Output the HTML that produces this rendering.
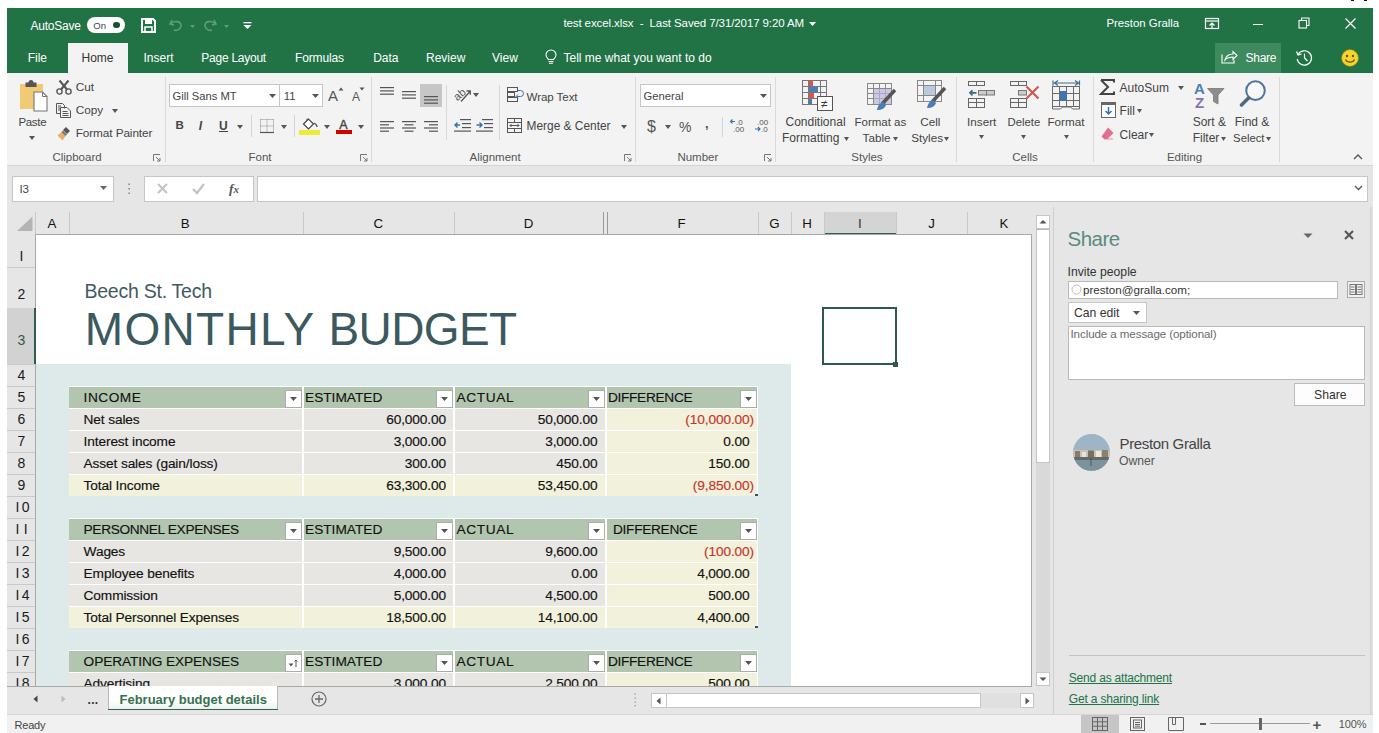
<!DOCTYPE html>
<html><head><meta charset="utf-8">
<style>
*{margin:0;padding:0;box-sizing:border-box}
html,body{width:1379px;height:733px;overflow:hidden;background:#fff;font-family:"Liberation Sans",sans-serif;color:#333}
.a{position:absolute}
svg.a{overflow:visible}
.t{position:absolute;white-space:nowrap;line-height:1}

.st{-webkit-text-stroke:0.2px currentColor}

</style></head><body>
<div class="a" style="left:7px;top:8px;width:1366px;height:65px;background:#217346"></div>
<div class="t" style="left:30.4px;top:19.8px;font-size:12px;color:#fff;letter-spacing:-0.2px">AutoSave</div>
<div class="a" style="left:87px;top:17px;width:38px;height:16px;border-radius:8px;background:#fff"></div>
<div class="t" style="left:93.3px;top:20.7px;font-size:9.6px;color:#444;">On</div>
<div class="a" style="left:113.4px;top:21.6px;width:6.5px;height:6.5px;border-radius:50%;background:#1f4e35"></div>
<svg class="a" style="left:141px;top:17.5px" width="15" height="15" viewBox="0 0 15 15"><path d="M1 1h11l2 2v11H1z" fill="none" stroke="#fff" stroke-width="2"/><rect x="4" y="2" width="7" height="4" fill="#fff"/><rect x="4" y="9" width="7" height="5" fill="none" stroke="#fff" stroke-width="1.5"/></svg>
<svg class="a" style="left:168px;top:17px" width="62" height="16" viewBox="0 0 62 16"><g fill="none" stroke="#5c9e7b" stroke-width="1.6"><path d="M4 3 L2 7 L6 8"/><path d="M2.5 7 C6 3 14 4 13 9 C12 13 8 14 6 13"/><path d="M46 3 L48 7 L44 8"/><path d="M47.5 7 C44 3 36 4 37 9 C38 13 42 14 44 13"/></g><path d="M22 8h5l-2.5 3z M56 8h5l-2.5 3z" fill="#5c9e7b"/></svg>
<svg class="a" style="left:243px;top:21px" width="9" height="9" viewBox="0 0 9 9"><rect x="0.5" y="1" width="8" height="1.3" fill="#fff"/><path d="M0.5 4h8l-4 4z" fill="#fff"/></svg>
<div class="t" style="left:563.4px;top:18.3px;font-size:11.5px;color:#fff;letter-spacing:-0.1px">test excel.xlsx&nbsp; -&nbsp; Last Saved 7/31/2017 9:20 AM</div>
<svg class="a" style="left:809px;top:22px" width="7" height="5" viewBox="0 0 7 5"><path d="M0 0h7l-3.5 4z" fill="#fff"/></svg>
<div class="t" style="left:1106.4px;top:18.3px;font-size:11.4px;color:#fff;">Preston Gralla</div>
<svg class="a" style="left:1204px;top:17px" width="16" height="13" viewBox="0 0 16 13"><g fill="none" stroke="#fff" stroke-width="1.2"><rect x="1.5" y="1.5" width="13" height="10"/><path d="M1.5 4h13"/><path d="M8 11V6 M5.5 8.5L8 6l2.5 2.5"/></g></svg>
<div class="a" style="left:1253px;top:23.5px;width:10px;height:1.2px;background:#fff"></div>
<svg class="a" style="left:1298px;top:17px" width="12" height="12" viewBox="0 0 12 12"><g fill="none" stroke="#fff" stroke-width="1.1"><rect x="1" y="3.5" width="7.5" height="7.5"/><path d="M3.5 3.5V1h7.5v7.5H8.5"/></g></svg>
<svg class="a" style="left:1344.5px;top:17.5px" width="11" height="11" viewBox="0 0 11 11"><path d="M0.5 0.5L10.5 10.5M10.5 0.5L0.5 10.5" stroke="#fff" stroke-width="1.2"/></svg>
<div class="a" style="left:1351.3px;top:0px;width:2.5px;height:1.3px;background:#111"></div>
<div class="a" style="left:1364.3px;top:0px;width:2.7px;height:1.3px;background:#111"></div>
<div class="a" style="left:68px;top:43px;width:60px;height:30px;background:#f3f3f3"></div>
<div class="t" style="left:27.7px;top:52.0px;font-size:12px;color:#fff;">File</div>
<div class="t" style="left:81.5px;top:52.0px;font-size:12px;color:#333;">Home</div>
<div class="t" style="left:143.5px;top:52.0px;font-size:12px;color:#fff;">Insert</div>
<div class="t" style="left:201.3px;top:52.0px;font-size:12px;color:#fff;letter-spacing:-0.25px">Page Layout</div>
<div class="t" style="left:295.0px;top:52.0px;font-size:12px;color:#fff;letter-spacing:-0.15px">Formulas</div>
<div class="t" style="left:373.2px;top:52.0px;font-size:12px;color:#fff;">Data</div>
<div class="t" style="left:426.0px;top:52.0px;font-size:12px;color:#fff;">Review</div>
<div class="t" style="left:492.0px;top:52.0px;font-size:12px;color:#fff;">View</div>
<svg class="a" style="left:545px;top:50px" width="12" height="14" viewBox="0 0 12 14"><g fill="none" stroke="#fff" stroke-width="1.1"><path d="M3.5 9.5C2 8 1 6.5 1 5a5 5 0 0 1 10 0c0 1.5-1 3-2.5 4.5z"/><path d="M3.5 11.5h5M4 13.2h4"/></g></svg>
<div class="t" style="left:563.5px;top:52.0px;font-size:12px;color:#fff;">Tell me what you want to do</div>
<div class="a" style="left:1215px;top:43px;width:66px;height:30px;background:#3d8a5e"></div>
<svg class="a" style="left:1221px;top:49px" width="17" height="15" viewBox="0 0 17 15"><g fill="none" stroke="#fff" stroke-width="1.1"><path d="M1 5.5V14h12v-3"/><path d="M4 11c1-4 4-6 8-6V2.5l4 4-4 4V8c-3 0-6 1-8 3z"/></g></svg>
<div class="t" style="left:1245.6px;top:52.0px;font-size:12px;color:#fff;letter-spacing:-0.3px">Share</div>
<svg class="a" style="left:1295px;top:48.5px" width="18" height="17" viewBox="0 0 18 17"><g fill="none" stroke="#fff" stroke-width="1.2"><path d="M3 5.5A7.2 7.2 0 1 1 2.2 10"/><path d="M1.5 2.5L3 6l3.5-1"/><path d="M9.5 4.5V9l3 3"/></g></svg>
<svg class="a" style="left:1341px;top:48.5px" width="18" height="18" viewBox="0 0 18 18"><circle cx="9" cy="9" r="8.3" fill="#f6d32d" stroke="#c9a400" stroke-width="0.6"/><circle cx="6" cy="7" r="1.2" fill="#6b5300"/><circle cx="12" cy="7" r="1.2" fill="#6b5300"/><path d="M4.5 10.5C6 14 12 14 13.5 10.5" fill="none" stroke="#6b5300" stroke-width="1.2"/></svg>
<div class="a" style="left:7px;top:73px;width:1366px;height:92px;background:#f3f3f3"></div>
<div class="a" style="left:7px;top:165px;width:1366px;height:1px;background:#d4d4d4"></div>
<div class="a" style="left:165px;top:77px;width:1px;height:85px;background:#dadada"></div>
<div class="a" style="left:371px;top:77px;width:1px;height:85px;background:#dadada"></div>
<div class="a" style="left:635px;top:77px;width:1px;height:85px;background:#dadada"></div>
<div class="a" style="left:775px;top:77px;width:1px;height:85px;background:#dadada"></div>
<div class="a" style="left:956px;top:77px;width:1px;height:85px;background:#dadada"></div>
<div class="a" style="left:1093px;top:77px;width:1px;height:85px;background:#dadada"></div>
<div class="a" style="left:1279px;top:77px;width:1px;height:85px;background:#dadada"></div>
<svg class="a" style="left:18px;top:80px" width="32" height="32" viewBox="0 0 32 32"><rect x="2" y="4" width="23" height="25" fill="#f1c25e" opacity="0.85"/><path d="M7.5 2.5h3a2.5 2.5 0 0 1 5 0h3v4.5h-11z" fill="#555"/><path d="M16 12h8.5l4.5 4.5V31H16z" fill="#fff" stroke="#777" stroke-width="1.1"/><path d="M24.5 12v4.5H29" fill="none" stroke="#777" stroke-width="1"/></svg>
<div class="t" style="left:18.4px;top:116.8px;font-size:11.5px;color:#444;letter-spacing:-0.3px">Paste</div>
<svg class="a" style="left:28.5px;top:135.5px" width="6" height="4" viewBox="0 0 6 4"><path d="M0 0h6l-3.0 4z" fill="#555"/></svg>
<svg class="a" style="left:56px;top:79.5px" width="16" height="15" viewBox="0 0 16 15"><g fill="none" stroke="#555" stroke-width="1.4"><circle cx="3.5" cy="11.5" r="2.6"/><circle cx="12.5" cy="11.5" r="2.6"/></g><path d="M5 9.5L12.5 0.5M11 9.5L3.5 0.5" stroke="#555" stroke-width="2"/></svg>
<div class="t" style="left:75.7px;top:82.3px;font-size:11.8px;color:#444;">Cut</div>
<svg class="a" style="left:56px;top:103px" width="16" height="15" viewBox="0 0 16 15"><g fill="none" stroke="#555" stroke-width="1"><path d="M0.5 0.5h6l2 2v3"/><path d="M0.5 0.5v10h4"/><path d="M4.5 4.5h6.5l3.5 3.5v6.5h-10z"/><path d="M6.5 8.5h5M6.5 10.5h6M6.5 12.5h6M2 3h3M2 5h2M2 7h2"/></g></svg>
<div class="t" style="left:75.7px;top:105.1px;font-size:11.8px;color:#444;">Copy</div>
<svg class="a" style="left:112.4px;top:108.5px" width="6" height="4" viewBox="0 0 6 4"><path d="M0 0h6l-3.0 4z" fill="#555"/></svg>
<svg class="a" style="left:57px;top:126px" width="15" height="15" viewBox="0 0 15 15"><path d="M9 1l4 4-3 3-4-4z" fill="#555"/><path d="M6 4.5l4 4-2 2-4-4z" fill="#777"/><path d="M4.5 6l4 4-3 4.5L0.5 9.5z" fill="#e3b462"/></svg>
<div class="t" style="left:75.7px;top:128.3px;font-size:11.8px;color:#444;letter-spacing:-0.1px">Format Painter</div>
<div class="t" style="left:52.4px;top:152.1px;font-size:11.5px;color:#555;">Clipboard</div>
<svg class="a" style="left:153px;top:154px" width="8" height="8" viewBox="0 0 8 8"><path d="M0.5 7V0.5H7" fill="none" stroke="#777" stroke-width="1"/><path d="M3 3l4 4M4 7h3V4" fill="none" stroke="#777" stroke-width="1"/></svg>
<div class="a" style="left:169px;top:84px;width:111px;height:23px;background:#fff;border:1px solid #c6c6c6"></div>
<div class="t" style="left:172.6px;top:90.7px;font-size:11.2px;color:#444;">Gill Sans MT</div>
<svg class="a" style="left:268.9px;top:93.5px" width="7" height="4" viewBox="0 0 7 4"><path d="M0 0h7l-3.5 4z" fill="#555"/></svg>
<div class="a" style="left:279px;top:84px;width:44px;height:23px;background:#fff;border:1px solid #c6c6c6"></div>
<div class="t" style="left:283.8px;top:90.7px;font-size:11.2px;color:#444;">11</div>
<svg class="a" style="left:311.9px;top:93.5px" width="7" height="4" viewBox="0 0 7 4"><path d="M0 0h7l-3.5 4z" fill="#555"/></svg>
<svg class="a" style="left:328px;top:86px" width="16" height="16" viewBox="0 0 16 16"><text x="0" y="14.5" font-family="Liberation Sans" font-size="15" fill="#555">A</text><path d="M10.5 4.5l2.5-3 2.5 3z" fill="#555"/></svg>
<svg class="a" style="left:351px;top:86px" width="14" height="16" viewBox="0 0 14 16"><text x="1" y="14.5" font-family="Liberation Sans" font-size="12" fill="#555">A</text><path d="M8.5 1.5h5l-2.5 3z" fill="#555"/></svg>
<div class="t" style="left:175.5px;top:120.3px;font-size:11.5px;color:#444;font-weight:bold">B</div>
<div class="t" style="left:198.8px;top:119.8px;font-size:12px;color:#444;font-style:italic;font-weight:bold">I</div>
<div class="t" style="left:219.0px;top:119.8px;font-size:12px;color:#444;font-weight:bold">U</div>
<div class="a" style="left:219px;top:131px;width:9px;height:1.3px;background:#444"></div>
<svg class="a" style="left:237.4px;top:124.5px" width="6" height="4" viewBox="0 0 6 4"><path d="M0 0h6l-3.0 4z" fill="#555"/></svg>
<div class="a" style="left:251px;top:115px;width:1px;height:22px;background:#d4d4d4"></div>
<svg class="a" style="left:259.5px;top:118.5px" width="14" height="14" viewBox="0 0 14 14"><g fill="none" stroke="#888" stroke-width="1" stroke-dasharray="1 1"><path d="M0.5 0.5h13M0.5 7h13M0.5 0.5v13M7 0.5v13M13.5 0.5v13"/></g><path d="M0 13.5h14" stroke="#555" stroke-width="1.2"/></svg>
<svg class="a" style="left:280.8px;top:124.5px" width="6" height="4" viewBox="0 0 6 4"><path d="M0 0h6l-3.0 4z" fill="#555"/></svg>
<div class="a" style="left:294px;top:115px;width:1px;height:22px;background:#d4d4d4"></div>
<svg class="a" style="left:302px;top:117px" width="17" height="13" viewBox="0 0 17 13"><path d="M5 1.5v3" stroke="#555" stroke-width="1"/><path d="M1.5 7l5-5 5 5-5 5z" fill="#fff" stroke="#444" stroke-width="1.2"/><path d="M12 6c2 1 3 2.5 3 4" stroke="#555" stroke-width="1.3" fill="none"/></svg>
<div class="a" style="left:299px;top:130px;width:20.5px;height:4.5px;background:#eeea3a"></div>
<svg class="a" style="left:323.7px;top:124.5px" width="6" height="4" viewBox="0 0 6 4"><path d="M0 0h6l-3.0 4z" fill="#555"/></svg>
<div class="t" style="left:339.2px;top:118.6px;font-size:12.5px;color:#444;-webkit-text-stroke:0.4px #444">A</div>
<div class="a" style="left:336px;top:130px;width:16px;height:4px;background:#d40000"></div>
<svg class="a" style="left:357.7px;top:124.5px" width="6" height="4" viewBox="0 0 6 4"><path d="M0 0h6l-3.0 4z" fill="#555"/></svg>
<div class="t" style="left:248.5px;top:152.1px;font-size:11.5px;color:#555;">Font</div>
<svg class="a" style="left:360px;top:154px" width="8" height="8" viewBox="0 0 8 8"><path d="M0.5 7V0.5H7" fill="none" stroke="#777" stroke-width="1"/><path d="M3 3l4 4M4 7h3V4" fill="none" stroke="#777" stroke-width="1"/></svg>
<svg class="a" style="left:380px;top:87px" width="14" height="8.6" viewBox="0 0 14 8.6"><rect x="0" y="0.0" width="14" height="1.2" fill="#555"/><rect x="0" y="3.3" width="14" height="1.2" fill="#555"/><rect x="0" y="6.6" width="14" height="1.2" fill="#555"/></svg>
<svg class="a" style="left:402px;top:91px" width="14" height="8.6" viewBox="0 0 14 8.6"><rect x="0" y="0.0" width="14" height="1.2" fill="#555"/><rect x="0" y="3.3" width="14" height="1.2" fill="#555"/><rect x="0" y="6.6" width="14" height="1.2" fill="#555"/></svg>
<div class="a" style="left:420px;top:84px;width:22px;height:23px;background:#c6c6c6"></div>
<svg class="a" style="left:424px;top:96px" width="14" height="8.6" viewBox="0 0 14 8.6"><rect x="0" y="0.0" width="14" height="1.2" fill="#555"/><rect x="0" y="3.3" width="14" height="1.2" fill="#555"/><rect x="0" y="6.6" width="14" height="1.2" fill="#555"/></svg>
<svg class="a" style="left:380px;top:121px" width="14" height="11" viewBox="0 0 14 11"><g fill="#555"><rect y="0" width="14" height="1.2"/><rect y="3.2" width="9" height="1.2"/><rect y="6.4" width="14" height="1.2"/><rect y="9.6" width="9" height="1.2"/></g></svg>
<svg class="a" style="left:402px;top:121px" width="14" height="11" viewBox="0 0 14 11"><g fill="#555"><rect y="0" width="14" height="1.2"/><rect x="2.5" y="3.2" width="9" height="1.2"/><rect y="6.4" width="14" height="1.2"/><rect x="2.5" y="9.6" width="9" height="1.2"/></g></svg>
<svg class="a" style="left:424px;top:121px" width="14" height="11" viewBox="0 0 14 11"><g fill="#555"><rect y="0" width="14" height="1.2"/><rect x="5" y="3.2" width="9" height="1.2"/><rect y="6.4" width="14" height="1.2"/><rect x="5" y="9.6" width="9" height="1.2"/></g></svg>
<div class="a" style="left:446px;top:85px;width:1px;height:55px;background:#d8d8d8"></div>
<svg class="a" style="left:454px;top:87px" width="18" height="15" viewBox="0 0 18 15"><text x="0" y="11" font-family="Liberation Sans" font-size="11" fill="#555" transform="rotate(-40 6 8)">ab</text><path d="M7 14.5L16 4.5M12.5 4h3.8v3.8" fill="none" stroke="#555" stroke-width="1.3"/></svg>
<svg class="a" style="left:473.3px;top:92.5px" width="6" height="4" viewBox="0 0 6 4"><path d="M0 0h6l-3.0 4z" fill="#555"/></svg>
<svg class="a" style="left:454px;top:119px" width="17" height="13" viewBox="0 0 17 13"><g fill="#555"><rect x="6" y="0" width="11" height="1.2"/><rect x="8" y="4" width="9" height="1.2"/><rect x="8" y="8" width="9" height="1.2"/><rect x="0" y="11.5" width="17" height="1.2"/></g><path d="M6 6H1M3.5 3.5L1 6l2.5 2.5" fill="none" stroke="#2e75b6" stroke-width="1.4"/></svg>
<svg class="a" style="left:476px;top:119px" width="17" height="13" viewBox="0 0 17 13"><g fill="#555"><rect x="6" y="0" width="11" height="1.2"/><rect x="8" y="4" width="9" height="1.2"/><rect x="8" y="8" width="9" height="1.2"/><rect x="0" y="11.5" width="17" height="1.2"/></g><path d="M0.5 6H6M3.5 3.5L6 6l-2.5 2.5" fill="none" stroke="#2e75b6" stroke-width="1.4"/></svg>
<div class="a" style="left:499px;top:85px;width:1px;height:55px;background:#d8d8d8"></div>
<svg class="a" style="left:507px;top:87px" width="17" height="15" viewBox="0 0 17 15"><g fill="none" stroke="#555" stroke-width="1"><rect x="0.5" y="0.5" width="10" height="4"/><rect x="0.5" y="5.5" width="7" height="4"/><rect x="0.5" y="10.5" width="10" height="4"/><path d="M11 3.5h2.5a3 3 0 0 1 0 6H9.5M11 7.5l-2 2 2 2" stroke="#2e75b6"/></g></svg>
<div class="t" style="left:526.6px;top:90.7px;font-size:11.6px;color:#444;letter-spacing:-0.1px">Wrap Text</div>
<svg class="a" style="left:507px;top:118px" width="15" height="15" viewBox="0 0 15 15"><g fill="none" stroke="#555" stroke-width="1"><rect x="0.5" y="0.5" width="14" height="14"/><path d="M0.5 4.5h14M0.5 10.5h14M7.5 0.5v4M7.5 10.5v4M3 7.5h9M4.5 6l-1.5 1.5 1.5 1.5M10.5 6l1.5 1.5-1.5 1.5"/></g></svg>
<div class="t" style="left:526.6px;top:121.3px;font-size:11.9px;color:#444;">Merge &amp; Center</div>
<svg class="a" style="left:620.6px;top:125px" width="6" height="4" viewBox="0 0 6 4"><path d="M0 0h6l-3.0 4z" fill="#555"/></svg>
<div class="t" style="left:469.5px;top:152.1px;font-size:11.5px;color:#555;">Alignment</div>
<svg class="a" style="left:624px;top:154px" width="8" height="8" viewBox="0 0 8 8"><path d="M0.5 7V0.5H7" fill="none" stroke="#777" stroke-width="1"/><path d="M3 3l4 4M4 7h3V4" fill="none" stroke="#777" stroke-width="1"/></svg>
<div class="a" style="left:640px;top:84px;width:131px;height:23px;background:#fff;border:1px solid #c6c6c6"></div>
<div class="t" style="left:643.6px;top:90.5px;font-size:11.2px;color:#444;">General</div>
<svg class="a" style="left:759.8px;top:93.5px" width="7" height="4" viewBox="0 0 7 4"><path d="M0 0h7l-3.5 4z" fill="#555"/></svg>
<div class="t" style="left:647.0px;top:119.4px;font-size:16px;color:#555;">$</div>
<svg class="a" style="left:664.6px;top:124.5px" width="6" height="4" viewBox="0 0 6 4"><path d="M0 0h6l-3.0 4z" fill="#555"/></svg>
<div class="t" style="left:679.0px;top:120.1px;font-size:14px;color:#555;">%</div>
<div class="t" style="left:705.0px;top:117.0px;font-size:13px;color:#555;font-weight:bold">,</div>
<div class="a" style="left:722px;top:117px;width:1px;height:20px;background:#d4d4d4"></div>
<svg class="a" style="left:730px;top:118px" width="16" height="15" viewBox="0 0 16 15"><text x="6" y="6.5" font-family="Liberation Sans" font-size="8" fill="#555">.0</text><text x="3" y="14" font-family="Liberation Sans" font-size="8" fill="#555">.00</text><path d="M5 3.5H0.5M2.5 1.5L0.5 3.5l2 2" fill="none" stroke="#2e75b6" stroke-width="1.1"/></svg>
<svg class="a" style="left:754px;top:118px" width="16" height="15" viewBox="0 0 16 15"><text x="3" y="6.5" font-family="Liberation Sans" font-size="8" fill="#555">.00</text><text x="7" y="14" font-family="Liberation Sans" font-size="8" fill="#555">.0</text><path d="M1 11h5M4 9l2 2-2 2" fill="none" stroke="#2e75b6" stroke-width="1.1"/></svg>
<div class="t" style="left:677.4px;top:152.1px;font-size:11.5px;color:#555;">Number</div>
<svg class="a" style="left:764px;top:154px" width="8" height="8" viewBox="0 0 8 8"><path d="M0.5 7V0.5H7" fill="none" stroke="#777" stroke-width="1"/><path d="M3 3l4 4M4 7h3V4" fill="none" stroke="#777" stroke-width="1"/></svg>
<svg class="a" style="left:802px;top:80px" width="31" height="31" viewBox="0 0 31 31"><g fill="none" stroke="#777" stroke-width="1"><rect x="0.5" y="0.5" width="24" height="24"/><path d="M0.5 6.5h24M0.5 12.5h24M0.5 18.5h24M6.5 0.5v24M18.5 0.5v24"/></g><rect x="7" y="1" width="4" height="5" fill="#d9534f"/><rect x="7" y="7" width="9" height="5" fill="#4a7ebb"/><rect x="7" y="13" width="5" height="5" fill="#d9534f"/><rect x="7" y="19" width="3" height="5" fill="#4a7ebb"/><rect x="15.5" y="16.5" width="15" height="14" fill="#fff" stroke="#555" stroke-width="1"/><text x="19" y="28" font-family="Liberation Sans" font-size="12" fill="#333">≠</text></svg>
<div class="t" style="left:785.5px;top:116.0px;font-size:12px;color:#444;">Conditional</div>
<div class="t" style="left:782.0px;top:131.7px;font-size:12px;color:#444;">Formatting</div>
<svg class="a" style="left:844.1px;top:136.5px" width="5" height="4" viewBox="0 0 5 4"><path d="M0 0h5l-2.5 4z" fill="#555"/></svg>
<svg class="a" style="left:867px;top:83px" width="30" height="29" viewBox="0 0 30 29"><g fill="none" stroke="#888" stroke-width="1"><rect x="0.5" y="0.5" width="24" height="21"/><path d="M0.5 5.5h24M0.5 10.5h24M0.5 15.5h24M6.5 0.5v21M12.5 0.5v21M18.5 0.5v21"/></g><rect x="7" y="6" width="17" height="15" fill="#b9b6d8" opacity="0.7"/><path d="M28 7l-13 14" stroke="#555" stroke-width="3.5"/><path d="M16 19c-3 1-5 3-6 8 5 0 8-2 9-5z" fill="#4a7ebb"/></svg>
<div class="t" style="left:854.5px;top:116.5px;font-size:11.5px;color:#444;">Format as</div>
<div class="t" style="left:862.6px;top:132.0px;font-size:11.7px;color:#444;">Table</div>
<svg class="a" style="left:893.1px;top:136.5px" width="5" height="4" viewBox="0 0 5 4"><path d="M0 0h5l-2.5 4z" fill="#555"/></svg>
<svg class="a" style="left:917px;top:80px" width="30" height="30" viewBox="0 0 30 30"><g fill="none" stroke="#888" stroke-width="1"><rect x="0.5" y="0.5" width="24" height="21"/><path d="M0.5 5.5h24M0.5 15.5h24M6.5 0.5v21M18.5 0.5v21"/></g><rect x="7" y="6" width="11" height="9" fill="#b8c9e0"/><path d="M28 8l-13 14" stroke="#555" stroke-width="3.5"/><path d="M16 20c-3 1-5 3-6 8 5 0 8-2 9-5z" fill="#4a7ebb"/></svg>
<div class="t" style="left:920.3px;top:116.3px;font-size:11.7px;color:#444;">Cell</div>
<div class="t" style="left:911.2px;top:132.0px;font-size:11.7px;color:#444;">Styles</div>
<svg class="a" style="left:943.8px;top:136.5px" width="5" height="4" viewBox="0 0 5 4"><path d="M0 0h5l-2.5 4z" fill="#555"/></svg>
<div class="t" style="left:851.3px;top:152.1px;font-size:11.5px;color:#555;">Styles</div>
<svg class="a" style="left:968px;top:81px" width="28" height="28" viewBox="0 0 28 28"><g fill="none" stroke="#666" stroke-width="1"><rect x="0.5" y="0.5" width="8" height="4"/><rect x="8.5" y="0.5" width="8" height="4"/><rect x="0.5" y="17.5" width="8" height="4"/><rect x="8.5" y="17.5" width="8" height="4"/><rect x="0.5" y="21.5" width="8" height="5"/><rect x="8.5" y="21.5" width="8" height="5"/></g><g fill="#ccc" stroke="#777" stroke-width="1"><rect x="10.5" y="9.5" width="8" height="4.5"/><rect x="18.5" y="9.5" width="8" height="4.5"/></g><path d="M8.5 11.8H2M4.5 9.3L2 11.8 4.5 14.3" fill="none" stroke="#3d6a85" stroke-width="1.8"/></svg>
<div class="t" style="left:967.1px;top:116.3px;font-size:11.7px;color:#444;">Insert</div>
<svg class="a" style="left:978.6px;top:135px" width="5" height="4" viewBox="0 0 5 4"><path d="M0 0h5l-2.5 4z" fill="#555"/></svg>
<svg class="a" style="left:1010px;top:81px" width="31" height="28" viewBox="0 0 31 28"><g fill="none" stroke="#666" stroke-width="1"><rect x="0.5" y="0.5" width="8" height="4"/><rect x="8.5" y="0.5" width="8" height="4"/><rect x="0.5" y="17.5" width="8" height="4"/><rect x="8.5" y="17.5" width="8" height="4"/><rect x="0.5" y="21.5" width="8" height="5"/><rect x="8.5" y="21.5" width="8" height="5"/></g><rect x="8.5" y="9.5" width="8" height="4.5" fill="#ccc" stroke="#777" stroke-width="1"/><path d="M16.5 5.5l12 12M28.5 5.5l-12 12" stroke="#cc5a55" stroke-width="2.2"/></svg>
<div class="t" style="left:1007.6px;top:116.6px;font-size:11.3px;color:#444;">Delete</div>
<svg class="a" style="left:1021.2px;top:135px" width="5" height="4" viewBox="0 0 5 4"><path d="M0 0h5l-2.5 4z" fill="#555"/></svg>
<svg class="a" style="left:1052px;top:79px" width="29" height="32" viewBox="0 0 29 32"><path d="M1 1.5v5M27.5 1.5v5M2.5 4h24M6 1.5L2.5 4 6 6.5M23 1.5l3.5 2.5L23 6.5" fill="none" stroke="#3f6f8a" stroke-width="1.2"/><g fill="none" stroke="#6a6a6a" stroke-width="1"><rect x="0.5" y="7.5" width="27" height="20"/><path d="M7.5 7.5v20M14.5 7.5v20M21.5 7.5v20M0.5 14.5h27M0.5 21.5h27"/><path d="M0.5 27.5v2.5h8l2 -2h8l2 2h7v-2.5"/></g><rect x="8" y="12" width="6.5" height="9.5" fill="#3f77b5"/></svg>
<div class="t" style="left:1047.4px;top:116.3px;font-size:11.7px;color:#444;">Format</div>
<svg class="a" style="left:1063.5px;top:135px" width="5" height="4" viewBox="0 0 5 4"><path d="M0 0h5l-2.5 4z" fill="#555"/></svg>
<div class="t" style="left:1012.2px;top:152.1px;font-size:11.5px;color:#555;">Cells</div>
<svg class="a" style="left:1100px;top:79px" width="16" height="16" viewBox="0 0 16 16"><path d="M1 1h13v2.5M1 1l7 7-7 7h13v-2.5" fill="none" stroke="#444" stroke-width="2"/></svg>
<div class="t" style="left:1119.6px;top:82.4px;font-size:12px;color:#444;">AutoSum</div>
<svg class="a" style="left:1178.2px;top:86px" width="6" height="4" viewBox="0 0 6 4"><path d="M0 0h6l-3.0 4z" fill="#555"/></svg>
<svg class="a" style="left:1101px;top:101.5px" width="15" height="16" viewBox="0 0 15 16"><rect x="0.5" y="0.5" width="14" height="15" fill="#fff" stroke="#666"/><rect x="0.5" y="0.5" width="14" height="2.5" fill="#666"/><path d="M7.5 5v7M4.5 9l3 3 3-3" fill="none" stroke="#2e75b6" stroke-width="1.5"/></svg>
<div class="t" style="left:1119.6px;top:105.1px;font-size:12px;color:#444;">Fill</div>
<svg class="a" style="left:1136.7px;top:109px" width="5" height="4" viewBox="0 0 5 4"><path d="M0 0h5l-2.5 4z" fill="#555"/></svg>
<svg class="a" style="left:1101px;top:127px" width="13" height="12" viewBox="0 0 13 12"><path d="M7 0.5l5.5 5.5-6 6H3L0.5 9.5z" fill="#e0708f"/><path d="M3 12h9" stroke="#e0708f" stroke-width="0.8"/></svg>
<div class="t" style="left:1119.6px;top:128.5px;font-size:12px;color:#444;">Clear</div>
<svg class="a" style="left:1149.1px;top:132.5px" width="5" height="4" viewBox="0 0 5 4"><path d="M0 0h5l-2.5 4z" fill="#555"/></svg>
<svg class="a" style="left:1194px;top:80px" width="32" height="30" viewBox="0 0 32 30"><text x="0" y="13.5" font-family="Liberation Sans" font-size="15" font-weight="bold" fill="#4a7fb5">A</text><text x="1" y="27.5" font-family="Liberation Sans" font-size="15" font-weight="bold" fill="#8a70b0">Z</text><path d="M13.5 8.5h16.5l-6 6.5v9l-4.5-2.5v-6.5z" fill="#8d8d8d" stroke="#777" stroke-width="0.8"/></svg>
<div class="t" style="left:1192.7px;top:116.0px;font-size:12px;color:#444;">Sort &amp;</div>
<div class="t" style="left:1192.7px;top:132.1px;font-size:12px;color:#444;">Filter</div>
<svg class="a" style="left:1221.3px;top:137px" width="5" height="4" viewBox="0 0 5 4"><path d="M0 0h5l-2.5 4z" fill="#555"/></svg>
<svg class="a" style="left:1238px;top:78px" width="30" height="30" viewBox="0 0 30 30"><circle cx="17.5" cy="12.6" r="9.3" fill="#fff" fill-opacity="0.35" stroke="#4d7699" stroke-width="2"/><path d="M10.5 20L3.5 27" stroke="#4d6a85" stroke-width="3.6" stroke-linecap="round"/></svg>
<div class="t" style="left:1234.7px;top:116.0px;font-size:12px;color:#444;">Find &amp;</div>
<div class="t" style="left:1233.1px;top:132.7px;font-size:11.3px;color:#444;">Select</div>
<svg class="a" style="left:1266.4px;top:137px" width="5" height="4" viewBox="0 0 5 4"><path d="M0 0h5l-2.5 4z" fill="#555"/></svg>
<div class="t" style="left:1166.9px;top:152.1px;font-size:11.5px;color:#555;">Editing</div>
<svg class="a" style="left:1353px;top:154px" width="10" height="6" viewBox="0 0 10 6"><path d="M1 5l4-4 4 4" fill="none" stroke="#555" stroke-width="1.4"/></svg>
<div class="a" style="left:7px;top:166px;width:1366px;height:41px;background:#e6e6e6"></div>
<div class="a" style="left:12px;top:176px;width:102px;height:26px;background:#fff;border:1px solid #c6c6c6"></div>
<div class="t" style="left:19.4px;top:183.6px;font-size:11.5px;color:#444;">I3</div>
<svg class="a" style="left:100.0px;top:185.5px" width="7" height="4" viewBox="0 0 7 4"><path d="M0 0h7l-3.5 4z" fill="#666"/></svg>
<svg class="a" style="left:128px;top:183px" width="3" height="12" viewBox="0 0 3 12"><g fill="#8a8a8a"><rect x="0.3" y="0.5" width="1.6" height="1.5"/><rect x="0.3" y="5" width="1.6" height="1.5"/><rect x="0.3" y="9.5" width="1.6" height="1.5"/></g></svg>
<div class="a" style="left:144px;top:176px;width:110px;height:26px;background:#fff;border:1px solid #c6c6c6"></div>
<svg class="a" style="left:157px;top:183px" width="11" height="11" viewBox="0 0 11 11"><path d="M1 1l9 9M10 1L1 10" stroke="#c2c2c2" stroke-width="2"/></svg>
<svg class="a" style="left:192px;top:183px" width="13" height="11" viewBox="0 0 13 11"><path d="M1 6l4 4 7-9" fill="none" stroke="#c2c2c2" stroke-width="2.2"/></svg>
<div class="t" style="left:229.0px;top:182.1px;font-size:13.5px;color:#555;font-family:'Liberation Serif'"><b><i>f</i></b><span style="font-size:11px"><b><i>x</i></b></span></div>
<div class="a" style="left:257px;top:176px;width:1111px;height:26px;background:#fff;border:1px solid #c6c6c6"></div>
<svg class="a" style="left:1354px;top:185px" width="9" height="6" viewBox="0 0 9 6"><path d="M1 1l3.5 3.5L8 1" fill="none" stroke="#555" stroke-width="1.3"/></svg>
<div class="a" style="left:7px;top:207px;width:1025px;height:27px;background:#e6e6e6"></div>
<div class="a" style="left:7px;top:234px;width:1025px;height:1px;background:#a8a8a8"></div>
<svg class="a" style="left:16px;top:216px" width="17" height="15" viewBox="0 0 17 15"><path d="M16.5 0.5V15H1z" fill="#b4b4b4"/></svg>
<div class="a" style="left:823.5px;top:212px;width:72.5px;height:22px;background:#d4d4d4"></div>
<div class="a" style="left:823.5px;top:232.8px;width:72.5px;height:1.7px;background:#2f5e4b"></div>
<div class="a" style="left:68.5px;top:212px;width:1px;height:22px;background:#c9c9c9"></div>
<div class="a" style="left:302.5px;top:212px;width:1px;height:22px;background:#c9c9c9"></div>
<div class="a" style="left:454px;top:212px;width:1px;height:22px;background:#c9c9c9"></div>
<div class="a" style="left:603px;top:212px;width:1px;height:22px;background:#c9c9c9"></div>
<div class="a" style="left:757.5px;top:212px;width:1px;height:22px;background:#c9c9c9"></div>
<div class="a" style="left:790.5px;top:212px;width:1px;height:22px;background:#c9c9c9"></div>
<div class="a" style="left:823.5px;top:212px;width:1px;height:22px;background:#c9c9c9"></div>
<div class="a" style="left:896px;top:212px;width:1px;height:22px;background:#c9c9c9"></div>
<div class="a" style="left:967px;top:212px;width:1px;height:22px;background:#c9c9c9"></div>
<div class="a" style="left:1032px;top:212px;width:1px;height:22px;background:#c9c9c9"></div>
<div class="a" style="left:35px;top:212px;width:1px;height:22px;background:#c9c9c9"></div>
<div class="a" style="left:607px;top:212px;width:1px;height:22px;background:#9a9a9a"></div>
<div class="a" style="left:603px;top:212px;width:1px;height:22px;background:#9a9a9a"></div>
<div class="t" style="left:47.5px;top:216.5px;font-size:13.3px;color:#111;">A</div>
<div class="t" style="left:180.8px;top:216.5px;font-size:13.3px;color:#111;">B</div>
<div class="t" style="left:373.6px;top:216.5px;font-size:13.3px;color:#111;">C</div>
<div class="t" style="left:523.8px;top:216.5px;font-size:13.3px;color:#111;">D</div>
<div class="t" style="left:677.5px;top:216.5px;font-size:13.3px;color:#111;">F</div>
<div class="t" style="left:769.3px;top:216.5px;font-size:13.3px;color:#111;">G</div>
<div class="t" style="left:802.3px;top:216.5px;font-size:13.3px;color:#111;">H</div>
<div class="t" style="left:858.0px;top:216.5px;font-size:13.3px;color:#333;">I</div>
<div class="t" style="left:928.2px;top:216.5px;font-size:13.3px;color:#111;">J</div>
<div class="t" style="left:999.4px;top:216.5px;font-size:13.3px;color:#111;">K</div>
<div class="a" style="left:7px;top:234px;width:29px;height:452px;background:#e6e6e6"></div>
<div class="a" style="left:35px;top:234px;width:1px;height:452px;background:#a8a8a8"></div>
<div class="a" style="left:7px;top:267px;width:28px;height:1px;background:#c9c9c9"></div>
<div class="a" style="left:7px;top:308px;width:28px;height:1px;background:#c9c9c9"></div>
<div class="a" style="left:7px;top:364px;width:28px;height:1px;background:#c9c9c9"></div>
<div class="a" style="left:7px;top:386px;width:28px;height:1px;background:#c9c9c9"></div>
<div class="a" style="left:7px;top:408px;width:28px;height:1px;background:#c9c9c9"></div>
<div class="a" style="left:7px;top:430px;width:28px;height:1px;background:#c9c9c9"></div>
<div class="a" style="left:7px;top:452px;width:28px;height:1px;background:#c9c9c9"></div>
<div class="a" style="left:7px;top:474px;width:28px;height:1px;background:#c9c9c9"></div>
<div class="a" style="left:7px;top:496px;width:28px;height:1px;background:#c9c9c9"></div>
<div class="a" style="left:7px;top:518px;width:28px;height:1px;background:#c9c9c9"></div>
<div class="a" style="left:7px;top:540px;width:28px;height:1px;background:#c9c9c9"></div>
<div class="a" style="left:7px;top:562px;width:28px;height:1px;background:#c9c9c9"></div>
<div class="a" style="left:7px;top:584px;width:28px;height:1px;background:#c9c9c9"></div>
<div class="a" style="left:7px;top:606px;width:28px;height:1px;background:#c9c9c9"></div>
<div class="a" style="left:7px;top:628px;width:28px;height:1px;background:#c9c9c9"></div>
<div class="a" style="left:7px;top:650px;width:28px;height:1px;background:#c9c9c9"></div>
<div class="a" style="left:7px;top:672px;width:28px;height:1px;background:#c9c9c9"></div>
<div class="a" style="left:7px;top:694px;width:28px;height:1px;background:#c9c9c9"></div>
<div class="a" style="left:7px;top:308px;width:28px;height:56px;background:#d2d2d2"></div>
<div class="a" style="left:34px;top:308px;width:2px;height:56px;background:#2f5e4b"></div>
<div class="t" style="left:17.4px;top:248.7px;font-size:14px;color:#1a1a1a;"><span style="display:inline-block;width:8.2px;text-align:center">I</span></div>
<div class="t" style="left:17.4px;top:287.2px;font-size:14px;color:#1a1a1a;"><span style="display:inline-block;width:8.2px;text-align:center">2</span></div>
<div class="t" style="left:17.4px;top:332.9px;font-size:14px;color:#2f5a4b;"><span style="display:inline-block;width:8.2px;text-align:center">3</span></div>
<div class="t" style="left:17.4px;top:367.9px;font-size:14px;color:#1a1a1a;"><span style="display:inline-block;width:8.2px;text-align:center">4</span></div>
<div class="t" style="left:17.4px;top:389.9px;font-size:14px;color:#1a1a1a;"><span style="display:inline-block;width:8.2px;text-align:center">5</span></div>
<div class="t" style="left:17.4px;top:411.9px;font-size:14px;color:#1a1a1a;"><span style="display:inline-block;width:8.2px;text-align:center">6</span></div>
<div class="t" style="left:17.4px;top:433.9px;font-size:14px;color:#1a1a1a;"><span style="display:inline-block;width:8.2px;text-align:center">7</span></div>
<div class="t" style="left:17.4px;top:455.9px;font-size:14px;color:#1a1a1a;"><span style="display:inline-block;width:8.2px;text-align:center">8</span></div>
<div class="t" style="left:17.4px;top:477.9px;font-size:14px;color:#1a1a1a;"><span style="display:inline-block;width:8.2px;text-align:center">9</span></div>
<div class="t" style="left:13.3px;top:499.9px;font-size:14px;color:#1a1a1a;"><span style="display:inline-block;width:8.2px;text-align:center">I</span><span style="display:inline-block;width:8.2px;text-align:center">0</span></div>
<div class="t" style="left:13.3px;top:521.9px;font-size:14px;color:#1a1a1a;"><span style="display:inline-block;width:8.2px;text-align:center">I</span><span style="display:inline-block;width:8.2px;text-align:center">I</span></div>
<div class="t" style="left:13.3px;top:543.9px;font-size:14px;color:#1a1a1a;"><span style="display:inline-block;width:8.2px;text-align:center">I</span><span style="display:inline-block;width:8.2px;text-align:center">2</span></div>
<div class="t" style="left:13.3px;top:565.9px;font-size:14px;color:#1a1a1a;"><span style="display:inline-block;width:8.2px;text-align:center">I</span><span style="display:inline-block;width:8.2px;text-align:center">3</span></div>
<div class="t" style="left:13.3px;top:587.9px;font-size:14px;color:#1a1a1a;"><span style="display:inline-block;width:8.2px;text-align:center">I</span><span style="display:inline-block;width:8.2px;text-align:center">4</span></div>
<div class="t" style="left:13.3px;top:609.9px;font-size:14px;color:#1a1a1a;"><span style="display:inline-block;width:8.2px;text-align:center">I</span><span style="display:inline-block;width:8.2px;text-align:center">5</span></div>
<div class="t" style="left:13.3px;top:631.9px;font-size:14px;color:#1a1a1a;"><span style="display:inline-block;width:8.2px;text-align:center">I</span><span style="display:inline-block;width:8.2px;text-align:center">6</span></div>
<div class="t" style="left:13.3px;top:653.9px;font-size:14px;color:#1a1a1a;"><span style="display:inline-block;width:8.2px;text-align:center">I</span><span style="display:inline-block;width:8.2px;text-align:center">7</span></div>
<div class="t" style="left:13.3px;top:675.9px;font-size:14px;color:#1a1a1a;"><span style="display:inline-block;width:8.2px;text-align:center">I</span><span style="display:inline-block;width:8.2px;text-align:center">8</span></div>
<div class="a" style="left:36px;top:235px;width:996px;height:451px;background:#fff"></div>
<div class="a" style="left:36px;top:364px;width:754.5px;height:330px;background:#dee9ea"></div>
<div class="t" style="left:84.5px;top:282.1px;font-size:19.5px;color:#3f5b60;letter-spacing:-0.25px">Beech St. Tech</div>
<div class="t" style="left:84.8px;top:305.9px;font-size:46px;color:#3b595e;letter-spacing:1.3px">MONTHLY</div>
<div class="t" style="left:328.5px;top:305.9px;font-size:46px;color:#3b595e;letter-spacing:-0.6px">BUDGET</div>
<div class="a" style="left:68.5px;top:386px;width:689px;height:110px;background:#fff"></div>
<div class="a" style="left:69.0px;top:387px;width:232.5px;height:21px;background:#b2c6af"></div>
<div class="t" style="left:83.6px;top:391.0px;font-size:13.7px;color:#111;letter-spacing:0.5px;-webkit-text-stroke:0.15px #111">INCOME</div>
<div class="a" style="left:303.5px;top:387px;width:149.5px;height:21px;background:#b2c6af"></div>
<div class="t" style="left:305.0px;top:391.0px;font-size:13.7px;color:#111;letter-spacing:0.0px;-webkit-text-stroke:0.15px #111">ESTIMATED</div>
<div class="a" style="left:455px;top:387px;width:149.5px;height:21px;background:#b2c6af"></div>
<div class="t" style="left:456.5px;top:391.0px;font-size:13.7px;color:#111;letter-spacing:0.6px;-webkit-text-stroke:0.15px #111">ACTUAL</div>
<div class="a" style="left:606.5px;top:387px;width:150.0px;height:21px;background:#b2c6af"></div>
<div class="t" style="left:607.9px;top:391.0px;font-size:13.7px;color:#111;letter-spacing:-0.3px;-webkit-text-stroke:0.15px #111">DIFFERENCE</div>
<div class="a" style="left:284.5px;top:390px;width:17px;height:17.5px;background:#fff;border:1px solid #acacac"></div>
<svg class="a" style="left:289.8px;top:396.6px" width="7" height="4" viewBox="0 0 7 4"><path d="M0 0h7l-3.5 4z" fill="#555"/></svg>
<div class="a" style="left:436px;top:390px;width:17px;height:17.5px;background:#fff;border:1px solid #acacac"></div>
<svg class="a" style="left:441.3px;top:396.6px" width="7" height="4" viewBox="0 0 7 4"><path d="M0 0h7l-3.5 4z" fill="#555"/></svg>
<div class="a" style="left:587.5px;top:390px;width:17px;height:17.5px;background:#fff;border:1px solid #acacac"></div>
<svg class="a" style="left:592.8px;top:396.6px" width="7" height="4" viewBox="0 0 7 4"><path d="M0 0h7l-3.5 4z" fill="#555"/></svg>
<div class="a" style="left:739.5px;top:390px;width:17px;height:17.5px;background:#fff;border:1px solid #acacac"></div>
<svg class="a" style="left:744.8px;top:396.6px" width="7" height="4" viewBox="0 0 7 4"><path d="M0 0h7l-3.5 4z" fill="#555"/></svg>
<div class="a" style="left:69.0px;top:409px;width:232.5px;height:21px;background:#e8e6e3"></div>
<div class="t" style="left:83.6px;top:413.0px;font-size:13.7px;color:#111;letter-spacing:-0.12px;-webkit-text-stroke:0.15px #111">Net sales</div>
<div class="a" style="left:303.5px;top:409px;width:149.5px;height:21px;background:#e8e6e3"></div>
<div class="t" style="right:933.0px;top:413.0px;font-size:13.7px;letter-spacing:-0.12px;color:#111;-webkit-text-stroke:0.15px #111">60,000.00</div>
<div class="a" style="left:455px;top:409px;width:149.5px;height:21px;background:#e8e6e3"></div>
<div class="t" style="right:781.5px;top:413.0px;font-size:13.7px;letter-spacing:-0.12px;color:#111;-webkit-text-stroke:0.15px #111">50,000.00</div>
<div class="a" style="left:606.5px;top:409px;width:150.0px;height:21px;background:#f2f2dc"></div>
<div class="t" style="right:625.0px;top:413.0px;font-size:13.7px;letter-spacing:-0.12px;color:#c8342c;-webkit-text-stroke:0.15px #c8342c">(10,000.00)</div>
<div class="a" style="left:69.0px;top:431px;width:232.5px;height:21px;background:#e8e6e3"></div>
<div class="t" style="left:83.6px;top:435.0px;font-size:13.7px;color:#111;letter-spacing:-0.12px;-webkit-text-stroke:0.15px #111">Interest income</div>
<div class="a" style="left:303.5px;top:431px;width:149.5px;height:21px;background:#e8e6e3"></div>
<div class="t" style="right:933.0px;top:435.0px;font-size:13.7px;letter-spacing:-0.12px;color:#111;-webkit-text-stroke:0.15px #111">3,000.00</div>
<div class="a" style="left:455px;top:431px;width:149.5px;height:21px;background:#e8e6e3"></div>
<div class="t" style="right:781.5px;top:435.0px;font-size:13.7px;letter-spacing:-0.12px;color:#111;-webkit-text-stroke:0.15px #111">3,000.00</div>
<div class="a" style="left:606.5px;top:431px;width:150.0px;height:21px;background:#f2f2dc"></div>
<div class="t" style="right:629.5px;top:435.0px;font-size:13.7px;letter-spacing:-0.12px;color:#111;-webkit-text-stroke:0.15px #111">0.00</div>
<div class="a" style="left:69.0px;top:453px;width:232.5px;height:21px;background:#e8e6e3"></div>
<div class="t" style="left:83.6px;top:457.0px;font-size:13.7px;color:#111;letter-spacing:-0.12px;-webkit-text-stroke:0.15px #111">Asset sales (gain/loss)</div>
<div class="a" style="left:303.5px;top:453px;width:149.5px;height:21px;background:#e8e6e3"></div>
<div class="t" style="right:933.0px;top:457.0px;font-size:13.7px;letter-spacing:-0.12px;color:#111;-webkit-text-stroke:0.15px #111">300.00</div>
<div class="a" style="left:455px;top:453px;width:149.5px;height:21px;background:#e8e6e3"></div>
<div class="t" style="right:781.5px;top:457.0px;font-size:13.7px;letter-spacing:-0.12px;color:#111;-webkit-text-stroke:0.15px #111">450.00</div>
<div class="a" style="left:606.5px;top:453px;width:150.0px;height:21px;background:#f2f2dc"></div>
<div class="t" style="right:629.5px;top:457.0px;font-size:13.7px;letter-spacing:-0.12px;color:#111;-webkit-text-stroke:0.15px #111">150.00</div>
<div class="a" style="left:69.0px;top:475px;width:232.5px;height:21px;background:#f2f2dc"></div>
<div class="t" style="left:83.6px;top:479.0px;font-size:13.7px;color:#111;letter-spacing:-0.12px;-webkit-text-stroke:0.15px #111">Total Income</div>
<div class="a" style="left:303.5px;top:475px;width:149.5px;height:21px;background:#f2f2dc"></div>
<div class="t" style="right:933.0px;top:479.0px;font-size:13.7px;letter-spacing:-0.12px;color:#111;-webkit-text-stroke:0.15px #111">63,300.00</div>
<div class="a" style="left:455px;top:475px;width:149.5px;height:21px;background:#f2f2dc"></div>
<div class="t" style="right:781.5px;top:479.0px;font-size:13.7px;letter-spacing:-0.12px;color:#111;-webkit-text-stroke:0.15px #111">53,450.00</div>
<div class="a" style="left:606.5px;top:475px;width:150.0px;height:21px;background:#f2f2dc"></div>
<div class="t" style="right:625.0px;top:479.0px;font-size:13.7px;letter-spacing:-0.12px;color:#c8342c;-webkit-text-stroke:0.15px #c8342c">(9,850.00)</div>
<div class="a" style="left:755px;top:493.5px;width:2.5px;height:2.5px;background:#3c4f66"></div>
<div class="a" style="left:68.5px;top:518px;width:689px;height:110px;background:#fff"></div>
<div class="a" style="left:69.0px;top:519px;width:232.5px;height:21px;background:#b2c6af"></div>
<div class="t" style="left:83.6px;top:523.0px;font-size:13.7px;color:#111;letter-spacing:-0.35px;-webkit-text-stroke:0.15px #111">PERSONNEL EXPENSES</div>
<div class="a" style="left:303.5px;top:519px;width:149.5px;height:21px;background:#b2c6af"></div>
<div class="t" style="left:305.0px;top:523.0px;font-size:13.7px;color:#111;letter-spacing:0.0px;-webkit-text-stroke:0.15px #111">ESTIMATED</div>
<div class="a" style="left:455px;top:519px;width:149.5px;height:21px;background:#b2c6af"></div>
<div class="t" style="left:456.5px;top:523.0px;font-size:13.7px;color:#111;letter-spacing:0.6px;-webkit-text-stroke:0.15px #111">ACTUAL</div>
<div class="a" style="left:606.5px;top:519px;width:150.0px;height:21px;background:#b2c6af"></div>
<div class="t" style="left:613.0px;top:523.0px;font-size:13.7px;color:#111;letter-spacing:-0.3px;-webkit-text-stroke:0.15px #111">DIFFERENCE</div>
<div class="a" style="left:284.5px;top:522px;width:17px;height:17.5px;background:#fff;border:1px solid #acacac"></div>
<svg class="a" style="left:289.8px;top:528.6px" width="7" height="4" viewBox="0 0 7 4"><path d="M0 0h7l-3.5 4z" fill="#555"/></svg>
<div class="a" style="left:436px;top:522px;width:17px;height:17.5px;background:#fff;border:1px solid #acacac"></div>
<svg class="a" style="left:441.3px;top:528.6px" width="7" height="4" viewBox="0 0 7 4"><path d="M0 0h7l-3.5 4z" fill="#555"/></svg>
<div class="a" style="left:587.5px;top:522px;width:17px;height:17.5px;background:#fff;border:1px solid #acacac"></div>
<svg class="a" style="left:592.8px;top:528.6px" width="7" height="4" viewBox="0 0 7 4"><path d="M0 0h7l-3.5 4z" fill="#555"/></svg>
<div class="a" style="left:739.5px;top:522px;width:17px;height:17.5px;background:#fff;border:1px solid #acacac"></div>
<svg class="a" style="left:744.8px;top:528.6px" width="7" height="4" viewBox="0 0 7 4"><path d="M0 0h7l-3.5 4z" fill="#555"/></svg>
<div class="a" style="left:69.0px;top:541px;width:232.5px;height:21px;background:#e8e6e3"></div>
<div class="t" style="left:83.6px;top:545.0px;font-size:13.7px;color:#111;letter-spacing:-0.12px;-webkit-text-stroke:0.15px #111">Wages</div>
<div class="a" style="left:303.5px;top:541px;width:149.5px;height:21px;background:#e8e6e3"></div>
<div class="t" style="right:933.0px;top:545.0px;font-size:13.7px;letter-spacing:-0.12px;color:#111;-webkit-text-stroke:0.15px #111">9,500.00</div>
<div class="a" style="left:455px;top:541px;width:149.5px;height:21px;background:#e8e6e3"></div>
<div class="t" style="right:781.5px;top:545.0px;font-size:13.7px;letter-spacing:-0.12px;color:#111;-webkit-text-stroke:0.15px #111">9,600.00</div>
<div class="a" style="left:606.5px;top:541px;width:150.0px;height:21px;background:#f2f2dc"></div>
<div class="t" style="right:625.0px;top:545.0px;font-size:13.7px;letter-spacing:-0.12px;color:#c8342c;-webkit-text-stroke:0.15px #c8342c">(100.00)</div>
<div class="a" style="left:69.0px;top:563px;width:232.5px;height:21px;background:#e8e6e3"></div>
<div class="t" style="left:83.6px;top:567.0px;font-size:13.7px;color:#111;letter-spacing:-0.12px;-webkit-text-stroke:0.15px #111">Employee benefits</div>
<div class="a" style="left:303.5px;top:563px;width:149.5px;height:21px;background:#e8e6e3"></div>
<div class="t" style="right:933.0px;top:567.0px;font-size:13.7px;letter-spacing:-0.12px;color:#111;-webkit-text-stroke:0.15px #111">4,000.00</div>
<div class="a" style="left:455px;top:563px;width:149.5px;height:21px;background:#e8e6e3"></div>
<div class="t" style="right:781.5px;top:567.0px;font-size:13.7px;letter-spacing:-0.12px;color:#111;-webkit-text-stroke:0.15px #111">0.00</div>
<div class="a" style="left:606.5px;top:563px;width:150.0px;height:21px;background:#f2f2dc"></div>
<div class="t" style="right:629.5px;top:567.0px;font-size:13.7px;letter-spacing:-0.12px;color:#111;-webkit-text-stroke:0.15px #111">4,000.00</div>
<div class="a" style="left:69.0px;top:585px;width:232.5px;height:21px;background:#e8e6e3"></div>
<div class="t" style="left:83.6px;top:589.0px;font-size:13.7px;color:#111;letter-spacing:-0.12px;-webkit-text-stroke:0.15px #111">Commission</div>
<div class="a" style="left:303.5px;top:585px;width:149.5px;height:21px;background:#e8e6e3"></div>
<div class="t" style="right:933.0px;top:589.0px;font-size:13.7px;letter-spacing:-0.12px;color:#111;-webkit-text-stroke:0.15px #111">5,000.00</div>
<div class="a" style="left:455px;top:585px;width:149.5px;height:21px;background:#e8e6e3"></div>
<div class="t" style="right:781.5px;top:589.0px;font-size:13.7px;letter-spacing:-0.12px;color:#111;-webkit-text-stroke:0.15px #111">4,500.00</div>
<div class="a" style="left:606.5px;top:585px;width:150.0px;height:21px;background:#f2f2dc"></div>
<div class="t" style="right:629.5px;top:589.0px;font-size:13.7px;letter-spacing:-0.12px;color:#111;-webkit-text-stroke:0.15px #111">500.00</div>
<div class="a" style="left:69.0px;top:607px;width:232.5px;height:21px;background:#f2f2dc"></div>
<div class="t" style="left:83.6px;top:611.0px;font-size:13.7px;color:#111;letter-spacing:-0.12px;-webkit-text-stroke:0.15px #111">Total Personnel Expenses</div>
<div class="a" style="left:303.5px;top:607px;width:149.5px;height:21px;background:#f2f2dc"></div>
<div class="t" style="right:933.0px;top:611.0px;font-size:13.7px;letter-spacing:-0.12px;color:#111;-webkit-text-stroke:0.15px #111">18,500.00</div>
<div class="a" style="left:455px;top:607px;width:149.5px;height:21px;background:#f2f2dc"></div>
<div class="t" style="right:781.5px;top:611.0px;font-size:13.7px;letter-spacing:-0.12px;color:#111;-webkit-text-stroke:0.15px #111">14,100.00</div>
<div class="a" style="left:606.5px;top:607px;width:150.0px;height:21px;background:#f2f2dc"></div>
<div class="t" style="right:629.5px;top:611.0px;font-size:13.7px;letter-spacing:-0.12px;color:#111;-webkit-text-stroke:0.15px #111">4,400.00</div>
<div class="a" style="left:755px;top:625.5px;width:2.5px;height:2.5px;background:#3c4f66"></div>
<div class="a" style="left:68.5px;top:650px;width:689px;height:44px;background:#fff"></div>
<div class="a" style="left:69.0px;top:651px;width:232.5px;height:21px;background:#b2c6af"></div>
<div class="t" style="left:83.6px;top:655.0px;font-size:13.7px;color:#111;letter-spacing:-0.1px;-webkit-text-stroke:0.15px #111">OPERATING EXPENSES</div>
<div class="a" style="left:303.5px;top:651px;width:149.5px;height:21px;background:#b2c6af"></div>
<div class="t" style="left:305.0px;top:655.0px;font-size:13.7px;color:#111;letter-spacing:0.0px;-webkit-text-stroke:0.15px #111">ESTIMATED</div>
<div class="a" style="left:455px;top:651px;width:149.5px;height:21px;background:#b2c6af"></div>
<div class="t" style="left:456.5px;top:655.0px;font-size:13.7px;color:#111;letter-spacing:0.6px;-webkit-text-stroke:0.15px #111">ACTUAL</div>
<div class="a" style="left:606.5px;top:651px;width:150.0px;height:21px;background:#b2c6af"></div>
<div class="t" style="left:607.9px;top:655.0px;font-size:13.7px;color:#111;letter-spacing:-0.3px;-webkit-text-stroke:0.15px #111">DIFFERENCE</div>
<div class="a" style="left:284.5px;top:654px;width:17px;height:17.5px;background:#fff;border:1px solid #acacac"></div>
<svg class="a" style="left:287.5px;top:659px" width="10" height="9" viewBox="0 0 10 9"><path d="M0.5 4.5h5l-2.5 3z" fill="#555"/><path d="M8 1v7M6.5 2.5L8 1l1.5 1.5" fill="none" stroke="#555" stroke-width="1"/></svg>
<div class="a" style="left:436px;top:654px;width:17px;height:17.5px;background:#fff;border:1px solid #acacac"></div>
<svg class="a" style="left:441.3px;top:660.6px" width="7" height="4" viewBox="0 0 7 4"><path d="M0 0h7l-3.5 4z" fill="#555"/></svg>
<div class="a" style="left:587.5px;top:654px;width:17px;height:17.5px;background:#fff;border:1px solid #acacac"></div>
<svg class="a" style="left:592.8px;top:660.6px" width="7" height="4" viewBox="0 0 7 4"><path d="M0 0h7l-3.5 4z" fill="#555"/></svg>
<div class="a" style="left:739.5px;top:654px;width:17px;height:17.5px;background:#fff;border:1px solid #acacac"></div>
<svg class="a" style="left:744.8px;top:660.6px" width="7" height="4" viewBox="0 0 7 4"><path d="M0 0h7l-3.5 4z" fill="#555"/></svg>
<div class="a" style="left:69.0px;top:673px;width:232.5px;height:21px;background:#e8e6e3"></div>
<div class="t" style="left:83.6px;top:677.0px;font-size:13.7px;color:#111;letter-spacing:-0.12px;-webkit-text-stroke:0.15px #111">Advertising</div>
<div class="a" style="left:303.5px;top:673px;width:149.5px;height:21px;background:#e8e6e3"></div>
<div class="t" style="right:933.0px;top:677.0px;font-size:13.7px;letter-spacing:-0.12px;color:#111;-webkit-text-stroke:0.15px #111">3,000.00</div>
<div class="a" style="left:455px;top:673px;width:149.5px;height:21px;background:#e8e6e3"></div>
<div class="t" style="right:781.5px;top:677.0px;font-size:13.7px;letter-spacing:-0.12px;color:#111;-webkit-text-stroke:0.15px #111">2,500.00</div>
<div class="a" style="left:606.5px;top:673px;width:150.0px;height:21px;background:#f2f2dc"></div>
<div class="t" style="right:629.5px;top:677.0px;font-size:13.7px;letter-spacing:-0.12px;color:#111;-webkit-text-stroke:0.15px #111">500.00</div>
<div class="a" style="left:822px;top:307px;width:74.5px;height:58px;border:2px solid #2c5b4a"></div>
<div class="a" style="left:892.5px;top:361.5px;width:5.5px;height:5.5px;background:#2c5b4a"></div>
<div class="a" style="left:1032px;top:207px;width:21px;height:507px;background:#e6e6e6"></div>
<div class="a" style="left:1031px;top:234px;width:1px;height:452.5px;background:#a9a9a9"></div>
<div class="a" style="left:1035.5px;top:228.5px;width:14px;height:443px;background:#d9d9d9"></div>
<div class="a" style="left:1035.5px;top:214.5px;width:14px;height:14px;background:#fff;border:1px solid #c6c6c6"></div>
<svg class="a" style="left:1038.5px;top:219px" width="8" height="5" viewBox="0 0 8 5"><path d="M0.5 4.5L4 1l3.5 3.5z" fill="#555"/></svg>
<div class="a" style="left:1035.5px;top:228.5px;width:14px;height:234px;background:#fff;border:1px solid #c6c6c6;border-top:1.5px solid #b5b5b5"></div>
<div class="a" style="left:1035.5px;top:671.5px;width:14px;height:14.5px;background:#fff;border:1px solid #c6c6c6"></div>
<svg class="a" style="left:1038.5px;top:677px" width="8" height="5" viewBox="0 0 8 5"><path d="M0.5 0.5h7L4 4z" fill="#555"/></svg>
<div class="a" style="left:7px;top:686.5px;width:1025px;height:27.5px;background:#e6e6e6"></div>
<div class="a" style="left:7px;top:686px;width:1025px;height:1px;background:#a9a9a9"></div>
<svg class="a" style="left:33px;top:695px" width="5" height="8" viewBox="0 0 5 8"><path d="M4.5 0.5v7L0.5 4z" fill="#444"/></svg>
<svg class="a" style="left:61px;top:695px" width="5" height="8" viewBox="0 0 5 8"><path d="M0.5 0.5v7L4.5 4z" fill="#bbb"/></svg>
<div class="t" style="left:87.5px;top:693.8px;font-size:12px;color:#333;font-weight:bold;letter-spacing:0.3px">...</div>
<div class="a" style="left:107.5px;top:686px;width:170.5px;height:24px;background:linear-gradient(#fff 60%,#e6f2ec);border-left:1px solid #b9b9b9;border-right:1px solid #b9b9b9"></div>
<div class="a" style="left:107.5px;top:708.6px;width:170.5px;height:1.6px;background:#3d5e4d"></div>
<div class="t" style="left:119.5px;top:693.4px;font-size:13px;color:#37704f;font-weight:bold;letter-spacing:0px">February budget details</div>
<svg class="a" style="left:311px;top:691px" width="16" height="16" viewBox="0 0 16 16"><circle cx="8" cy="8" r="7" fill="none" stroke="#666" stroke-width="1.2"/><path d="M8 4v8M4 8h8" stroke="#666" stroke-width="1.3"/></svg>
<svg class="a" style="left:634px;top:693px" width="3" height="14" viewBox="0 0 3 14"><g fill="#999"><rect x="0.5" y="0.5" width="1.3" height="1.3"/><rect x="0.5" y="4.5" width="1.3" height="1.3"/><rect x="0.5" y="8.5" width="1.3" height="1.3"/><rect x="0.5" y="12" width="1.3" height="1.3"/></g></svg>
<div class="a" style="left:651px;top:693px;width:383px;height:14.5px;background:#e0e0e0"></div>
<div class="a" style="left:651px;top:693px;width:15.5px;height:14.5px;background:#fff;border:1px solid #c6c6c6"></div>
<svg class="a" style="left:655.5px;top:696.5px" width="5" height="8" viewBox="0 0 5 8"><path d="M4.5 0.5v7L0.5 4z" fill="#555"/></svg>
<div class="a" style="left:666px;top:693px;width:315px;height:14.5px;background:#fff;border:1px solid #c6c6c6"></div>
<div class="a" style="left:1019.5px;top:693px;width:14.5px;height:14.5px;background:#fff;border:1px solid #c6c6c6"></div>
<svg class="a" style="left:1024.5px;top:696.5px" width="5" height="8" viewBox="0 0 5 8"><path d="M0.5 0.5v7L4.5 4z" fill="#555"/></svg>
<div class="a" style="left:1053px;top:207px;width:320px;height:507px;background:#e6e6e6"></div>
<div class="a" style="left:1053px;top:207px;width:1px;height:507px;background:#cfcfcf"></div>
<div class="a" style="left:1369.5px;top:207px;width:3.5px;height:507px;background:#dedede"></div>
<div class="a" style="left:1370.3px;top:207px;width:1.2px;height:507px;background:#d2d2d2"></div>
<div class="t" style="left:1067.5px;top:228.8px;font-size:20.5px;color:#5a8b80;letter-spacing:-0.5px">Share</div>
<svg class="a" style="left:1302.5px;top:233px" width="10" height="6" viewBox="0 0 10 6"><path d="M0.5 0.5h9L5 5z" fill="#666"/></svg>
<svg class="a" style="left:1344px;top:230px" width="10" height="10" viewBox="0 0 10 10"><path d="M1 1l8 8M9 1L1 9" stroke="#555" stroke-width="2.1"/></svg>
<div class="t" style="left:1067.5px;top:265.7px;font-size:12.2px;color:#333;">Invite people</div>
<div class="a" style="left:1068px;top:281px;width:270px;height:18px;background:#fff;border:1px solid #b9b9b9"></div>
<svg class="a" style="left:1071px;top:284px" width="11" height="11" viewBox="0 0 11 11"><circle cx="5.5" cy="5.5" r="4.5" fill="none" stroke="#bbb" stroke-width="1"/></svg>
<div class="t" style="left:1083.0px;top:283.6px;font-size:11.6px;color:#333;">preston@gralla.com;</div>
<svg class="a" style="left:1347px;top:281px" width="18" height="17" viewBox="0 0 18 17"><rect x="0.5" y="0.5" width="17" height="16" fill="#f2f2f2" stroke="#aaa"/><g fill="none" stroke="#777" stroke-width="1"><rect x="3" y="3.5" width="5.5" height="10"/><rect x="9.5" y="3.5" width="5.5" height="10"/><path d="M4 6h3.5M4 8.5h3.5M4 11h3.5M10.5 6h3.5M10.5 8.5h3.5M10.5 11h3.5"/></g></svg>
<div class="a" style="left:1068px;top:302px;width:79px;height:21px;background:#fff;border:1px solid #c6c6c6"></div>
<div class="t" style="left:1074.0px;top:306.5px;font-size:12.2px;color:#333;">Can edit</div>
<svg class="a" style="left:1132.5px;top:310.5px" width="7" height="4" viewBox="0 0 7 4"><path d="M0 0h7l-3.5 4z" fill="#555"/></svg>
<div class="a" style="left:1068px;top:326px;width:297px;height:54px;background:#fff;border:1px solid #b9b9b9"></div>
<div class="t" style="left:1070.5px;top:328.4px;font-size:11.6px;color:#6a6a6a;letter-spacing:-0.1px">Include a message (optional)</div>
<div class="a" style="left:1294px;top:383px;width:71px;height:23px;background:#fdfdfd;border:1px solid #bcbcbc"></div>
<div class="t" style="left:1314.0px;top:388.9px;font-size:12.2px;color:#333;">Share</div>
<svg class="a" style="left:1072.5px;top:433.5px" width="37" height="37" viewBox="0 0 37 37"><defs><clipPath id="av"><circle cx="18.5" cy="18.5" r="18.3"/></clipPath></defs><g clip-path="url(#av)"><rect width="37" height="37" fill="#8fa8b8"/><rect y="0" width="37" height="17" fill="#9db5c6"/><rect y="16" width="37" height="10" fill="#c9c2b0"/><rect x="2" y="17" width="5" height="6" fill="#8a7a66"/><rect x="9" y="18" width="4" height="5" fill="#e8e4da"/><rect x="15" y="16.5" width="6" height="7" fill="#7a6f62"/><rect x="23" y="17" width="5" height="6" fill="#ece8de"/><rect x="29" y="16" width="6" height="7" fill="#8f806c"/><rect y="23" width="37" height="3" fill="#5f6b6c"/><rect y="26" width="37" height="11" fill="#7d939b"/><path d="M18 24v8" stroke="#444" stroke-width="0.8"/></g></svg>
<div class="t" style="left:1119.5px;top:436.3px;font-size:15px;color:#444;letter-spacing:-0.35px">Preston Gralla</div>
<div class="t" style="left:1119.0px;top:454.7px;font-size:12.2px;color:#555;">Owner</div>
<div class="a" style="left:1068.5px;top:654.5px;width:296px;height:1px;background:#c2c2c2"></div>
<div class="t" style="left:1068.8px;top:671.8px;font-size:12px;color:#217346;letter-spacing:-0.2px"><u>Send as attachment</u></div>
<div class="t" style="left:1068.8px;top:692.8px;font-size:12px;color:#217346;letter-spacing:-0.17px"><u>Get a sharing link</u></div>
<div class="a" style="left:7px;top:714px;width:1366px;height:19px;background:#f1f1f1"></div>
<div class="a" style="left:7px;top:714px;width:1366px;height:1px;background:#d6d6d6"></div>
<div class="t" style="left:14.5px;top:719.5px;font-size:11px;color:#444;letter-spacing:-0.2px">Ready</div>
<div class="a" style="left:1081px;top:715px;width:38px;height:18px;background:#c6c6c6"></div>
<svg class="a" style="left:1092px;top:717px" width="16" height="14" viewBox="0 0 16 14"><g fill="none" stroke="#666" stroke-width="1"><rect x="0.5" y="0.5" width="15" height="13"/><path d="M5.5 0.5v13M10.5 0.5v13M0.5 4.8h15M0.5 9.2h15"/></g></svg>
<svg class="a" style="left:1130px;top:717px" width="15" height="14" viewBox="0 0 15 14"><g fill="none" stroke="#666" stroke-width="1"><rect x="0.5" y="0.5" width="14" height="13"/><rect x="3.5" y="3" width="8" height="8"/><path d="M5 5.5h5M5 7.5h5M5 9.2h5"/></g></svg>
<svg class="a" style="left:1168px;top:717px" width="16" height="14" viewBox="0 0 16 14"><g fill="none" stroke="#666" stroke-width="1"><path d="M0.5 0.5h15v13H0.5z"/><path d="M7.5 0.5v7H4.5V0.5"/></g></svg>
<div class="a" style="left:1200px;top:723px;width:6px;height:1.6px;background:#555"></div>
<div class="a" style="left:1210px;top:723.2px;width:100px;height:1px;background:#999"></div>
<div class="a" style="left:1258.5px;top:718px;width:3.5px;height:12px;background:#666"></div>
<div class="t" style="left:1312.5px;top:717.3px;font-size:15px;color:#555;font-weight:bold">+</div>
<div class="t" style="left:1338.7px;top:719.2px;font-size:11px;color:#555;letter-spacing:-0.1px">100%</div>
</body></html>
